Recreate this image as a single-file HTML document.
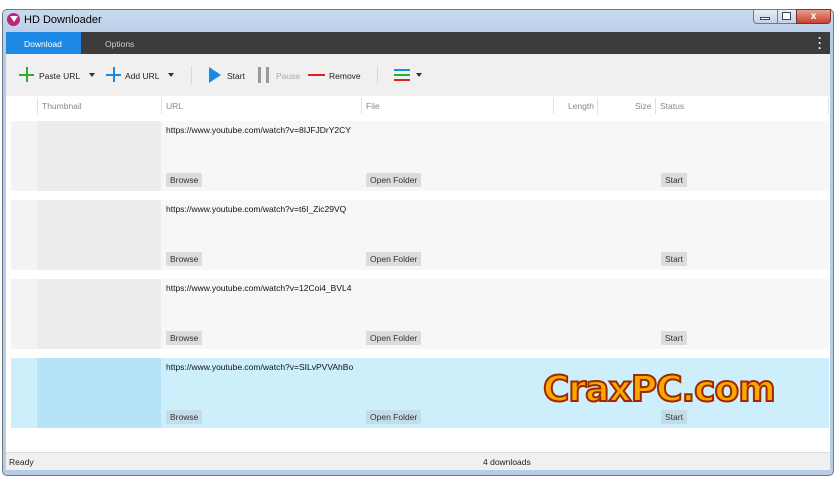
<!DOCTYPE html>
<html><head><meta charset="utf-8"><style>
*{margin:0;padding:0;box-sizing:border-box}
body{width:836px;height:484px;background:#fff;font-family:"Liberation Sans",sans-serif;font-size:8.5px;color:#222;position:relative;overflow:hidden}
.abs{position:absolute}
.win{left:2px;top:9px;width:832px;height:467px;border:1px solid #6b7b8c;border-radius:5px;background:linear-gradient(#c9daef,#b7cbe6 30px,#b8cce4);}
.btn{background:#dcdcdc;border-radius:1px;padding:2px 4px;font-size:8.5px;color:#333;position:absolute}
.row{position:absolute;left:11px;width:818px;height:70px;background:#f7f7f7}
.row .a{position:absolute;left:0;top:0;width:26px;height:70px;background:#f3f3f3}
.row .t{position:absolute;left:26px;top:0;width:124px;height:70px;background:#ececec}
.row .u{position:absolute;left:155px;top:4px;font-size:8.5px;color:#111}
.sel{background:#cdeefb}.sel .a{background:#cdeefb}.sel .t{background:#b7e3f9}
.hd{position:absolute;top:101px;color:#888;font-size:8.5px}
.sep{position:absolute;top:98px;width:1px;height:16px;background:#e2e2e2}
</style></head><body>
<div class="abs win"></div>
<div class="abs" style="left:7px;top:13px;width:13px;height:13px;border-radius:50%;background:#c0237a"></div>
<div class="abs" style="left:10px;top:16px;width:0;height:0;border-left:4px solid transparent;border-right:4px solid transparent;border-top:6px solid #fff"></div>
<div class="abs" style="left:24px;top:14px;font-size:11px;color:#000">HD Downloader</div>
<div class="abs" style="left:753px;top:9px;width:25px;height:15px;border:1px solid #778;background:linear-gradient(#e4ecf6,#c2d2e6);border-radius:0 0 0 4px"></div>
<div class="abs" style="left:760px;top:17px;width:10px;height:3px;border:1px solid #445;background:#fff"></div>
<div class="abs" style="left:777px;top:9px;width:20px;height:15px;border:1px solid #778;background:linear-gradient(#e4ecf6,#c2d2e6)"></div>
<div class="abs" style="left:782px;top:12px;width:9px;height:8px;border:1px solid #445;background:#fff"></div>
<div class="abs" style="left:796px;top:9px;width:35px;height:15px;border:1px solid #733;background:linear-gradient(#e8a090,#c7402c);border-radius:0 0 4px 0;color:#fff;font-weight:bold;text-align:center;font-size:10px;line-height:13px">x</div>
<div class="abs" style="left:6px;top:32px;width:824px;height:22px;background:#3c3c3c"></div>
<div class="abs" style="left:6px;top:32px;width:75px;height:22px;background:#1e88e5"></div>
<div class="abs" style="left:24px;top:39px;color:#fff">Download</div>
<div class="abs" style="left:105px;top:39px;color:#ccc">Options</div>
<div class="abs" style="left:818px;top:36px;color:#fff;font-size:12px;line-height:5px;font-weight:bold">·<br>·<br>·</div>
<div class="abs" style="left:6px;top:54px;width:824px;height:42px;background:#f0f0f0"></div>
<div class="abs" style="left:19px;top:74px;width:15px;height:2px;background:#2ab02a"></div><div class="abs" style="left:26px;top:67px;width:2px;height:15px;background:#2ab02a"></div>
<div class="abs" style="left:39px;top:71px">Paste URL</div>
<div class="abs" style="left:89px;top:73px;border-left:3px solid transparent;border-right:3px solid transparent;border-top:4px solid #333"></div>
<div class="abs" style="left:106px;top:74px;width:15px;height:2px;background:#1e88e5"></div><div class="abs" style="left:113px;top:67px;width:2px;height:15px;background:#1e88e5"></div>
<div class="abs" style="left:125px;top:71px">Add URL</div>
<div class="abs" style="left:168px;top:73px;border-left:3px solid transparent;border-right:3px solid transparent;border-top:4px solid #333"></div>
<div class="abs" style="left:191px;top:66px;width:1px;height:18px;background:#d8d8d8"></div>
<div class="abs" style="left:209px;top:67px;border-top:8px solid transparent;border-bottom:8px solid transparent;border-left:12px solid #1e88e5"></div>
<div class="abs" style="left:227px;top:71px">Start</div>
<div class="abs" style="left:258px;top:67px;width:3px;height:16px;background:#999"></div><div class="abs" style="left:266px;top:67px;width:3px;height:16px;background:#999"></div>
<div class="abs" style="left:276px;top:71px;color:#aaa">Pause</div>
<div class="abs" style="left:308px;top:74px;width:17px;height:2px;background:#e02020"></div>
<div class="abs" style="left:329px;top:71px">Remove</div>
<div class="abs" style="left:377px;top:66px;width:1px;height:18px;background:#d8d8d8"></div>
<div class="abs" style="left:394px;top:69px;width:16px;height:2px;background:#1e88e5"></div>
<div class="abs" style="left:394px;top:74px;width:16px;height:2px;background:#2ab02a"></div>
<div class="abs" style="left:394px;top:79px;width:16px;height:2px;background:#e02020"></div>
<div class="abs" style="left:416px;top:73px;border-left:3px solid transparent;border-right:3px solid transparent;border-top:4px solid #333"></div>
<div class="abs" style="left:6px;top:96px;width:824px;height:356px;background:#fff"></div>
<div class="hd" style="left:42px">Thumbnail</div><div class="hd" style="left:166px">URL</div><div class="hd" style="left:366px">File</div><div class="hd" style="left:568px">Length</div><div class="hd" style="left:635px">Size</div><div class="hd" style="left:660px">Status</div>
<div class="sep" style="left:37px"></div><div class="sep" style="left:161px"></div><div class="sep" style="left:361px"></div><div class="sep" style="left:553px"></div><div class="sep" style="left:597px"></div><div class="sep" style="left:655px"></div><div class="sep" style="left:828px"></div>

<div class="row" style="top:121px"><div class="a"></div><div class="t"></div><div class="u">https://www.youtube.com/watch?v=8IJFJDrY2CY</div><div class="btn" style="left:155px;top:52px">Browse</div><div class="btn" style="left:355px;top:52px">Open Folder</div><div class="btn" style="left:650px;top:52px">Start</div></div>
<div class="row" style="top:200px"><div class="a"></div><div class="t"></div><div class="u">https://www.youtube.com/watch?v=t6I_Zic29VQ</div><div class="btn" style="left:155px;top:52px">Browse</div><div class="btn" style="left:355px;top:52px">Open Folder</div><div class="btn" style="left:650px;top:52px">Start</div></div>
<div class="row" style="top:279px"><div class="a"></div><div class="t"></div><div class="u">https://www.youtube.com/watch?v=12Coi4_BVL4</div><div class="btn" style="left:155px;top:52px">Browse</div><div class="btn" style="left:355px;top:52px">Open Folder</div><div class="btn" style="left:650px;top:52px">Start</div></div>
<div class="row sel" style="top:358px"><div class="a"></div><div class="t"></div><div class="u">https://www.youtube.com/watch?v=SILvPVVAhBo</div><div class="btn" style="left:155px;top:52px;background:#c4dce8">Browse</div><div class="btn" style="left:355px;top:52px;background:#c4dce8">Open Folder</div><div class="btn" style="left:650px;top:52px;background:#c4dce8">Start</div></div>
<div class="abs" style="left:543px;top:369px;font-size:36px;font-weight:bold;color:#f8a800;-webkit-text-stroke:2px #a02800;letter-spacing:-1px;font-family:'DejaVu Sans',sans-serif">CraxPC.com</div>
<div class="abs" style="left:6px;top:452px;width:824px;height:18px;background:#f0f0f0;border-top:1px solid #ddd"></div>
<div class="abs" style="left:9px;top:457px">Ready</div>
<div class="abs" style="left:483px;top:457px">4 downloads</div>
</body></html>
